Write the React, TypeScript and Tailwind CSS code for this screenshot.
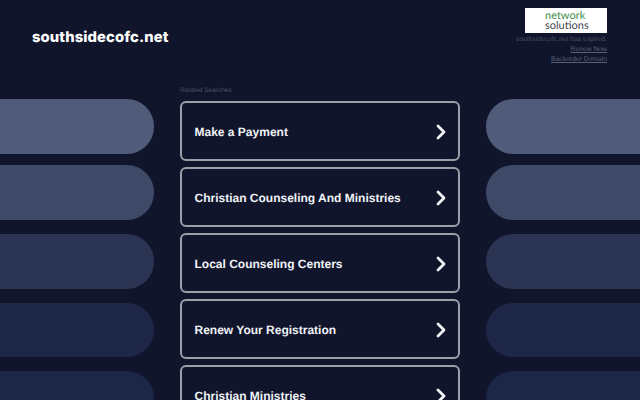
const searches = [
  'Make a Payment',
  'Christian Counseling And Ministries',
  'Local Counseling Centers',
  'Renew Your Registration',
  'Christian Ministries',
]

// gaps between the pills are not even in the original
const pills = [
  'bg-[#4f5b78]',
  'mt-[11.5px] bg-[#3e4968]',
  'mt-[14.5px] bg-[#2c3454]',
  'mt-[14px] bg-[#1f2749]',
  'mt-[13.5px] bg-[#1c2647]',
]

function Chevron() {
  return (
    <svg width="10" height="16" viewBox="0 0 10 16" fill="none" className="mt-[1px] shrink-0">
      <path d="M2 2l6 6-6 6" stroke="#f3f4f6" strokeWidth="2.8" strokeLinecap="round" strokeLinejoin="round" />
    </svg>
  )
}

function Pills({ side }: { side: 'left' | 'right' }) {
  return (
    <div className="flex w-[154px] shrink-0 flex-col pt-[99px]">
      {pills.map((color) => (
        <div
          key={color}
          className={`h-[54.5px] shrink-0 ${color} ${side === 'left' ? 'rounded-r-[27px]' : 'rounded-l-[27px]'}`}
        />
      ))}
    </div>
  )
}

export default function App() {
  return (
    <div className="relative h-[400px] w-[640px] overflow-hidden bg-[#10152c] font-['Liberation_Sans',sans-serif] [text-rendering:geometricPrecision]">
      <div className="flex h-full justify-between">
        <Pills side="left" />
        <main className="flex w-[280px] shrink-0 flex-col pt-[85px]">
          <div className="h-[16px] shrink-0 pt-[0.5px] text-[6.5px] leading-[9px] text-[#4a5068]">Related Searches</div>
          <div className="flex flex-col gap-[6px]">
            {searches.map((s) => (
              <div
                key={s}
                className="flex h-[60px] shrink-0 items-center justify-between rounded-[6px] border-[2.5px] border-[#9a9fa9] pl-[12.5px] pr-[12px]"
              >
                <span className="pt-[1.5px] text-[12px] font-bold text-[#f1f3f7]">{s}</span>
                <Chevron />
              </div>
            ))}
          </div>
        </main>
        <Pills side="right" />
      </div>

      <header className="absolute inset-x-0 top-0 flex justify-between pl-[32px] pr-[33px]">
        <h1 className="pt-[26.5px] font-['Inter',sans-serif] text-[14.8px] font-extrabold leading-5 tracking-[0.1px] text-white">
          southsidecofc.net
        </h1>
        <div className="flex flex-col items-end pt-[8px]">
          <div className="flex h-[25px] w-[82px] flex-col justify-center bg-white pl-[20px] font-['Lato',sans-serif] text-[11px] leading-[10px]">
            <span className="text-[#3c8a4c]">network</span>
            <span className="text-[#3f4450]">solutions</span>
          </div>
          <p className="mt-[1.5px] text-[6.75px] leading-[10px] text-[#4a5068]">southsidecofc.net has expired.</p>
          <a className="text-[6.75px] leading-[10px] text-[#5a6078] underline">Renew Now</a>
          <a className="text-[6.75px] leading-[10px] text-[#5a6078] underline">Backorder Domain</a>
        </div>
      </header>
    </div>
  )
}
